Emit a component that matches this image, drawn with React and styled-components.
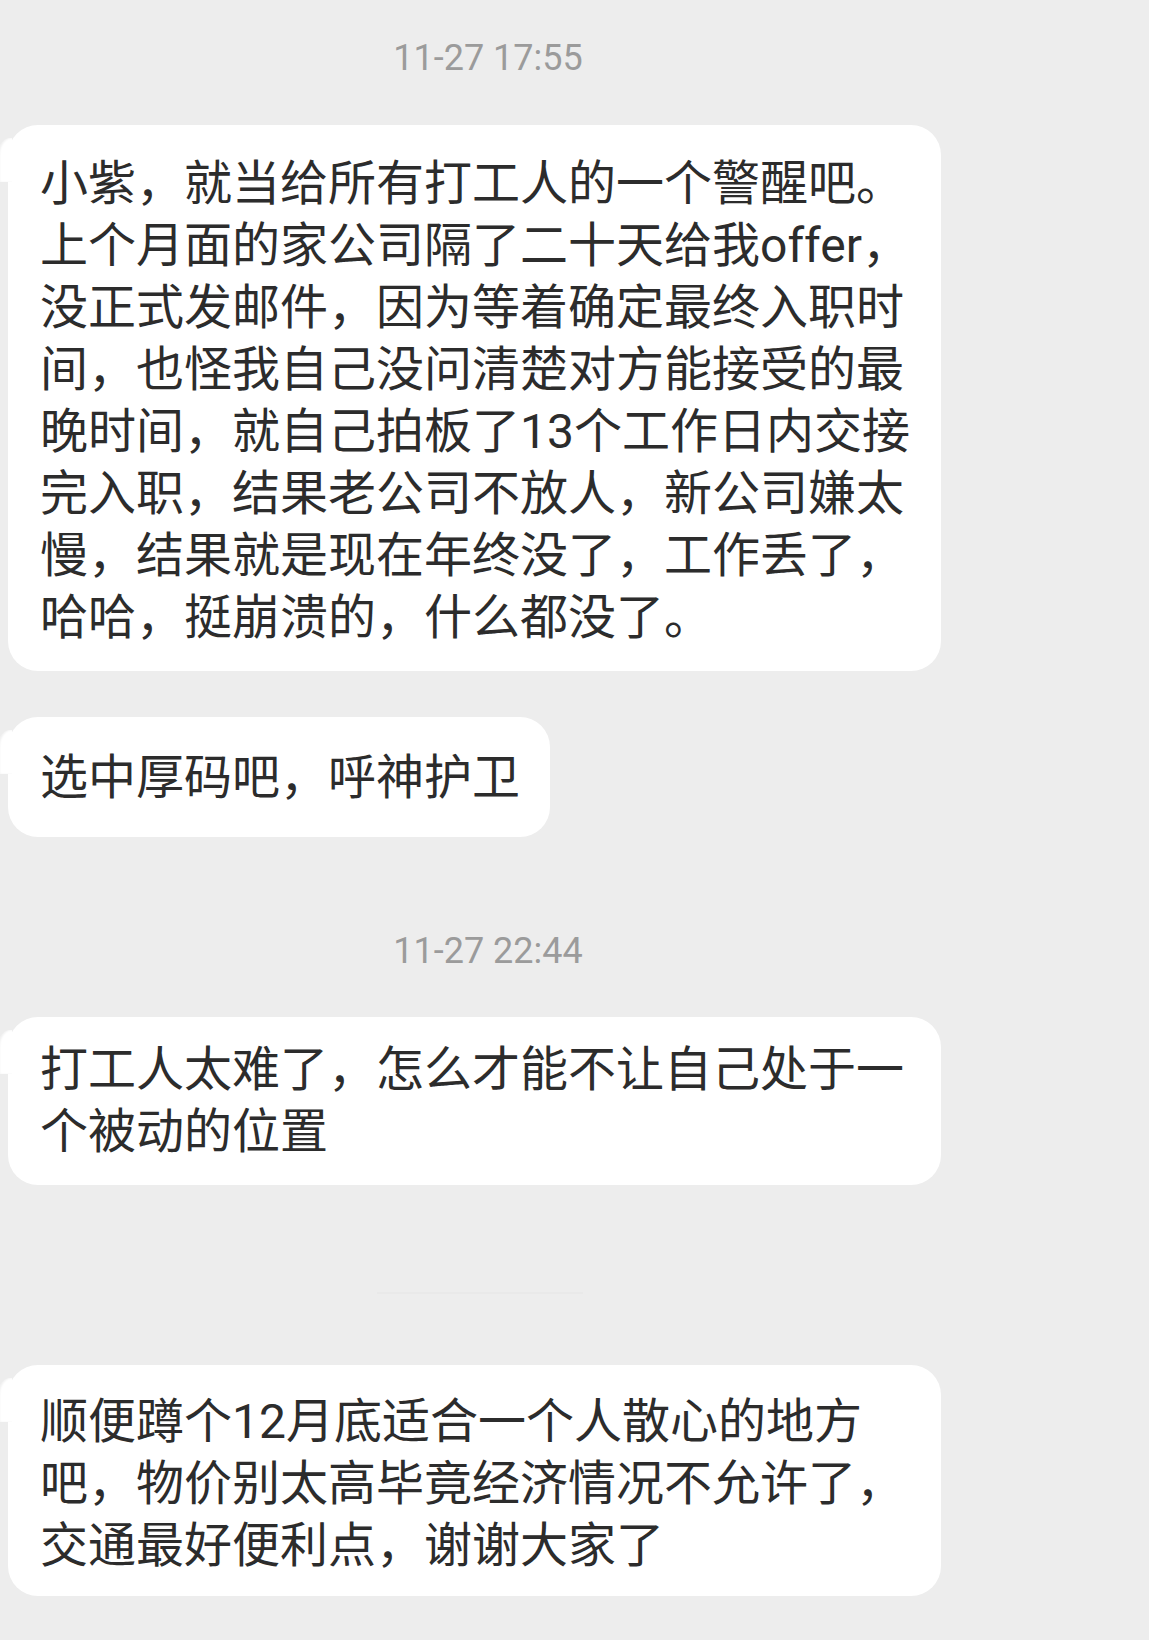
import React from "react"
import styled, { createGlobalStyle } from "styled-components"

const GlobalStyle = createGlobalStyle`
  html, body {
    margin: 0;
    padding: 0;
    background: #ededed;
  }
  body {
    font-family: Roboto, "Noto Sans CJK SC", sans-serif;
    -webkit-font-smoothing: antialiased;
  }
`

const Page = styled.div`
  display: flex;
  flex-direction: column;
  align-items: flex-start;
  width: 1149px;
  min-height: 1640px;
  background: #ededed;
  overflow: hidden;
`

const Stamp = styled.div`
  align-self: stretch;
  margin-top: ${p => p.top}px;
  padding-right: 173px;
  text-align: center;
  font-family: Roboto, "Noto Sans CJK SC", sans-serif;
  font-size: 36px;
  line-height: 36px;
  color: #9b9b9b;
`

// faint remains of an erased time stamp
const Ghost = styled.div`
  margin-top: ${p => p.top}px;
  margin-left: 377px;
  width: 206px;
  height: 2px;
  background: #e9e9e9;
`

const Bubble = styled.div`
  position: relative;
  box-sizing: border-box;
  margin-top: ${p => p.top}px;
  margin-left: 8px;
  width: ${p => (p.wide ? "933px" : "auto")};
  padding: ${p => p.pad} 30px ${p => p.padBottom} 32px;
  background: #ffffff;
  border-radius: 30px;
  font-family: Roboto, "Noto Sans CJK SC", sans-serif;
  font-size: 48px;
  line-height: 62px;
  color: #2c2c2c;
  white-space: nowrap;

  &::before {
    content: "";
    position: absolute;
    left: -10px;
    top: 13px;
    width: 14px;
    height: 44px;
    background: #ffffff;
    border-top-left-radius: 12px 16px;
    box-shadow: inset 2px 0 2px rgba(0, 0, 0, 0.06);
  }
`

const Line = styled.div``

const messages = [
  {
    top: 49,
    wide: true,
    pad: "28px",
    padBottom: "22px",
    lines: [
      "小紫，就当给所有打工人的一个警醒吧。",
      "上个月面的家公司隔了二十天给我offer，",
      "没正式发邮件，因为等着确定最终入职时",
      "间，也怪我自己没问清楚对方能接受的最",
      "晚时间，就自己拍板了13个工作日内交接",
      "完入职，结果老公司不放人，新公司嫌太",
      "慢，结果就是现在年终没了，工作丢了，",
      "哈哈，挺崩溃的，什么都没了。",
    ],
  },
  {
    top: 46,
    pad: "30px",
    padBottom: "28px",
    lines: ["选中厚码吧，呼神护卫"],
  },
]

const later = [
  {
    top: 48,
    wide: true,
    pad: "22px",
    padBottom: "22px",
    lines: ["打工人太难了，怎么才能不让自己处于一", "个被动的位置"],
  },
]

const last = {
  top: 71,
  wide: true,
  pad: "26px",
  padBottom: "19px",
  lines: [
    "顺便蹲个12月底适合一个人散心的地方",
    "吧，物价别太高毕竟经济情况不允许了，",
    "交通最好便利点，谢谢大家了",
  ],
}

const Message = ({ msg }) => (
  <Bubble top={msg.top} wide={msg.wide} pad={msg.pad} padBottom={msg.padBottom}>
    {msg.lines.map((l, i) => (
      <Line key={i}>{l}</Line>
    ))}
  </Bubble>
)

const App = () => {
  return (
    <Page>
      <GlobalStyle />
      <Stamp top={40}>11-27 17:55</Stamp>
      {messages.map((m, i) => (
        <Message key={i} msg={m} />
      ))}
      <Stamp top={96}>11-27 22:44</Stamp>
      {later.map((m, i) => (
        <Message key={i} msg={m} />
      ))}
      <Ghost top={107} />
      <Message msg={last} />
    </Page>
  )
}

export default App
